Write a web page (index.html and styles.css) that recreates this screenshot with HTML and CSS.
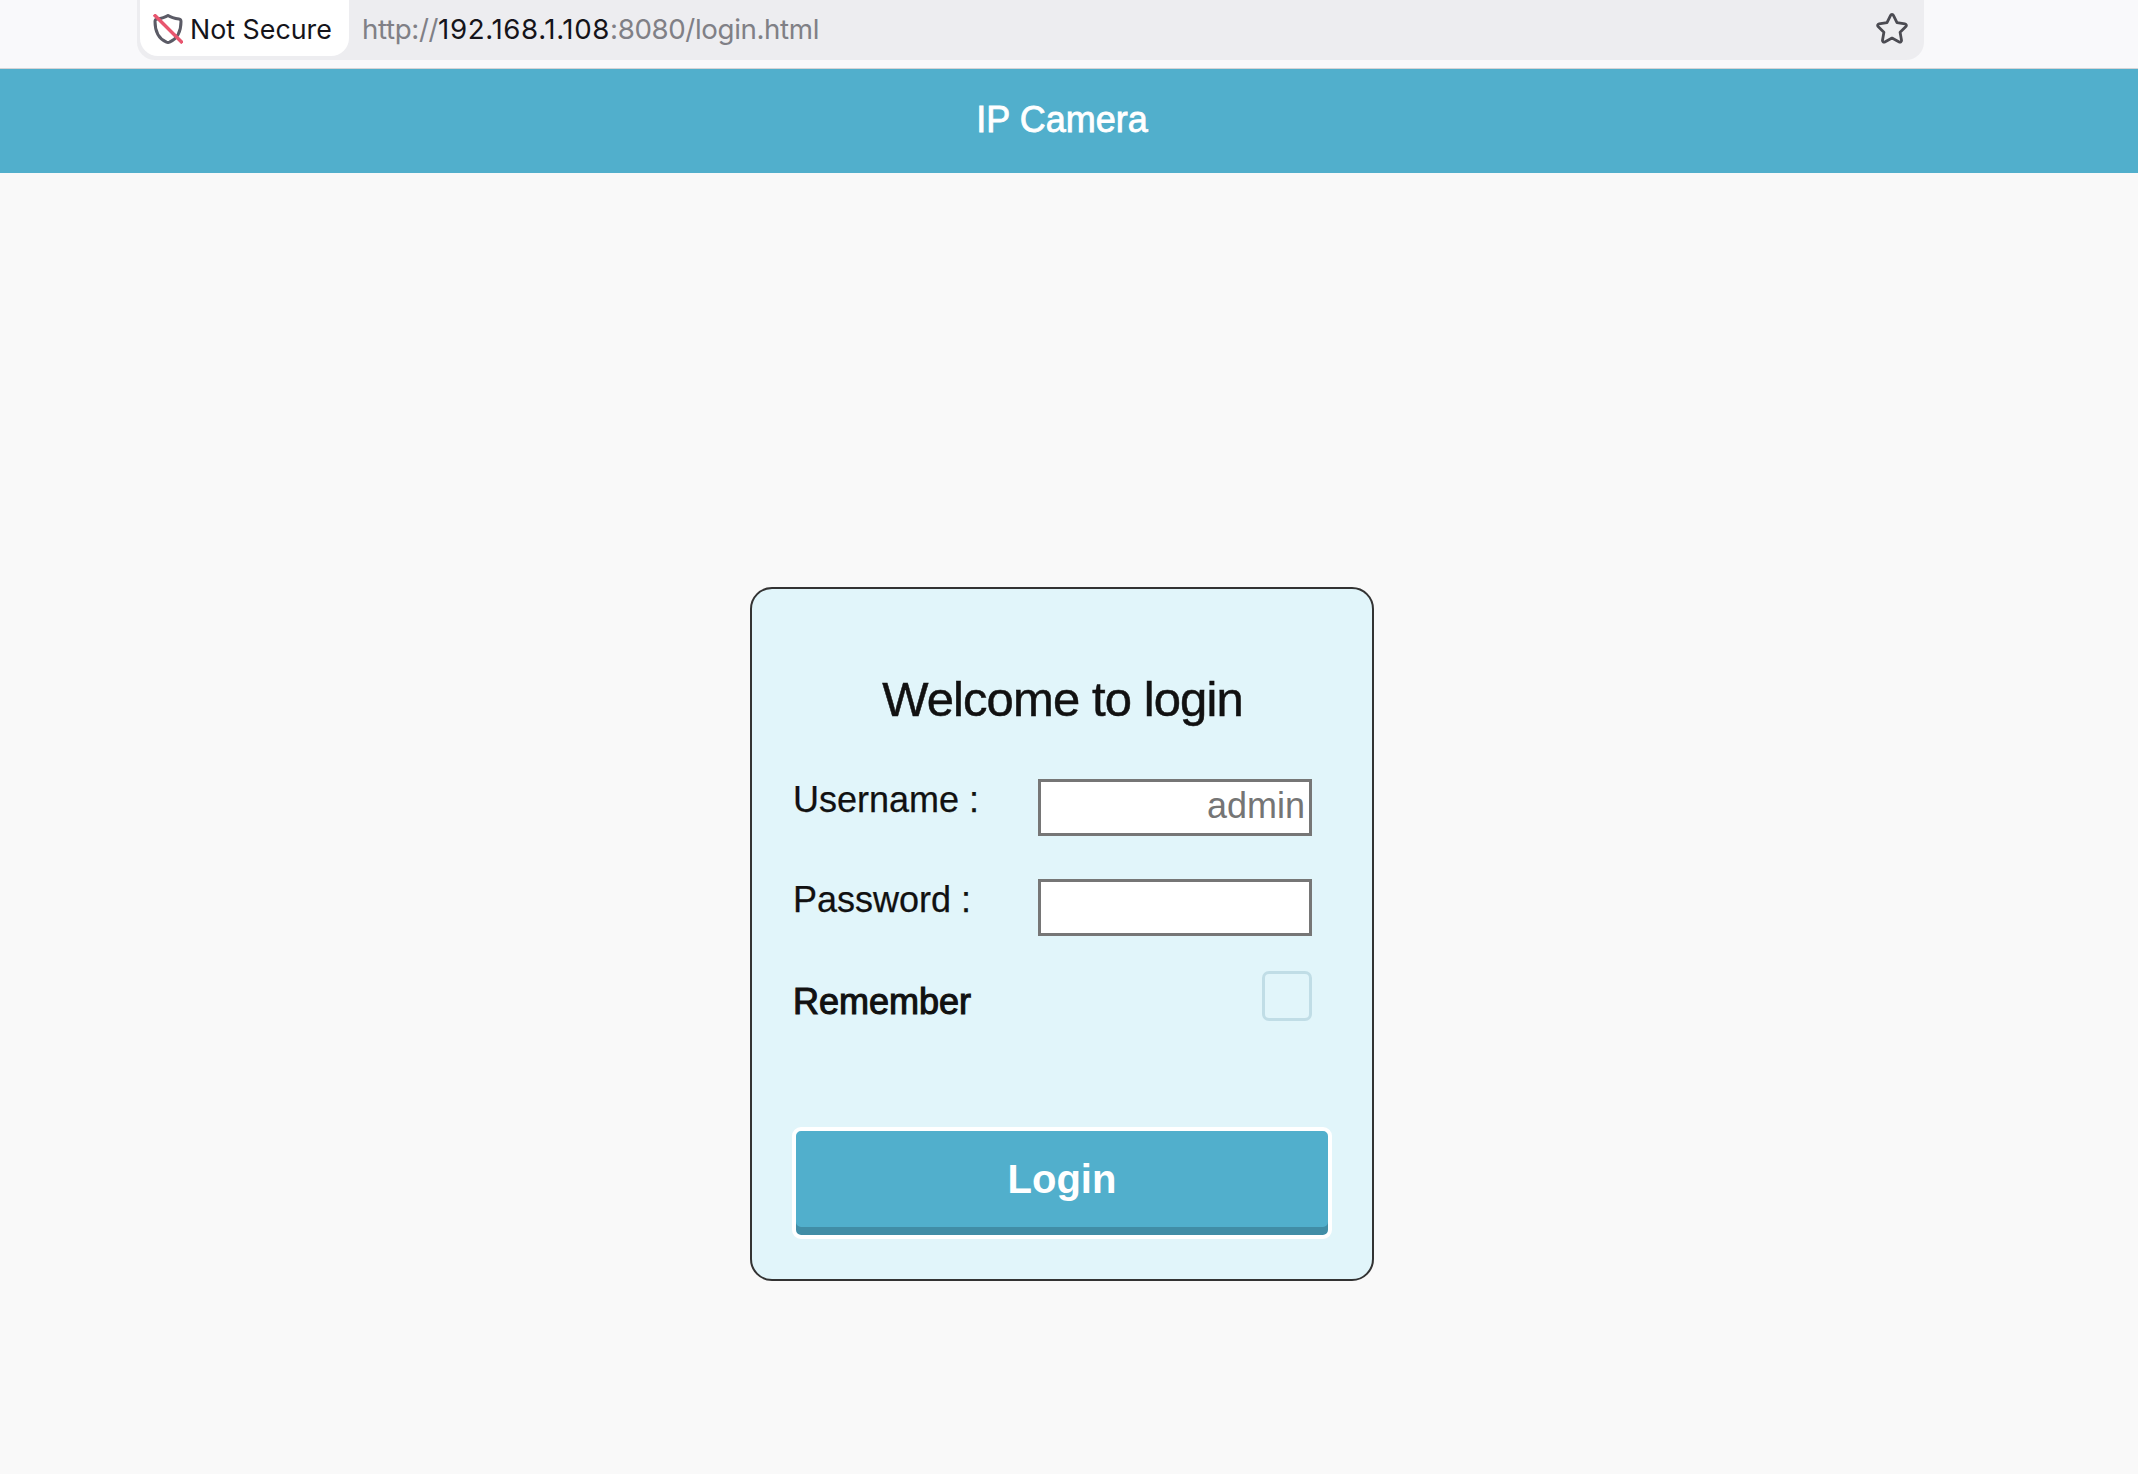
FILE: index.html
```html
<!DOCTYPE html>
<html lang="en">
<head>
<meta charset="utf-8">
<title>IP Camera</title>
<link rel="stylesheet" href="styles.css">
</head>
<body>
<div class="toolbar">
  <div class="urlbar">
    <div class="pill">
      <svg class="shield" viewBox="0 0 30 30" width="30" height="30" aria-hidden="true">
        <path d="M15 1.5 C12 3.5 8 4.5 4 5 C2.5 5.2 2 6 2 7.5 C2 15 4 24 13.5 28.2 C14.5 28.6 15.5 28.6 16.5 28.2 C26 24 28 15 28 7.5 C28 6 27.5 5.2 26 5 C22 4.5 18 3.5 15 1.5 Z" fill="none" stroke="#5b5b66" stroke-width="3" stroke-linejoin="round"/>
        <path d="M1 0.5 L29.5 29" stroke="#e8566f" stroke-width="3.4" fill="none"/>
      </svg>
      <span class="pill-text">Not Secure</span>
    </div>
    <div class="url"><span class="dim">http://</span><span class="host">192.168.1.108</span><span class="dim">:8080/login.html</span></div>
    <svg class="star" viewBox="0 0 32 32" width="32" height="32" aria-hidden="true">
      <path d="M16 2.5 a1.6 1.6 0 0 1 1.4 .9 l3.6 7.3 8 1.2 a1.6 1.6 0 0 1 .9 2.7 l-5.8 5.6 1.4 8 a1.6 1.6 0 0 1 -2.3 1.7 L16 26.1 l-7.2 3.8 a1.6 1.6 0 0 1 -2.3 -1.7 l1.4 -8 -5.8 -5.6 a1.6 1.6 0 0 1 .9 -2.7 l8 -1.2 3.6 -7.3 A1.6 1.6 0 0 1 16 2.5 Z" fill="none" stroke="#4b4b52" stroke-width="2.8" stroke-linejoin="round"/>
    </svg>
  </div>
</div>
<header class="banner"><span class="banner-title">IP Camera</span></header>
<main class="page">
  <form class="card">
    <h1 class="title">Welcome to login</h1>
    <div class="row">
      <label class="label" for="user">Username :</label>
      <input class="field" id="user" type="text" placeholder="admin">
    </div>
    <div class="row">
      <label class="label" for="pass">Password :</label>
      <input class="field" id="pass" type="password">
    </div>
    <div class="row row-remember">
      <span class="label label-strong">Remember</span>
      <span class="check"></span>
    </div>
    <button class="login" type="button">Login</button>
  </form>
</main>
</body>
</html>
```
FILE: styles.css
```css
* { box-sizing: border-box; }
html, body { margin: 0; padding: 0; }
body {
  background: #f9f9f9;
  font-family: "Liberation Sans", Arial, sans-serif;
  color: #111;
  height: 1474px;
  overflow: hidden;
}
.toolbar {
  height: 69px;
  background: #f9f9fb;
  border-bottom: 1px solid #d4d4d6;
  padding-left: 137px;
}
.urlbar {
  width: 1787px;
  height: 60px;
  background: #ededf0;
  border-radius: 0 0 18px 18px;
  display: flex;
  align-items: flex-start;
  padding-left: 3px;
}
.pill {
  width: 209px;
  height: 56px;
  background: #fff;
  border-radius: 0 0 18px 18px;
  display: flex;
  align-items: center;
  padding-left: 13px;
  gap: 7px;
  font-family: Inter, sans-serif;
  font-size: 26.8px;
  color: #15141a;
}
.pill-text { margin-top: 1px; }
.shield { flex: none; margin-top: 1px; }
.url {
  margin-left: 13px;
  height: 58px;
  line-height: 58px;
  font-family: Inter, sans-serif;
  font-size: 27.7px;
  color: #15141a;
  white-space: nowrap;
}
.dim { color: #808086; letter-spacing: -0.37px; }
.host { letter-spacing: 0.6px; }
.star { margin-left: auto; margin-right: 16px; margin-top: 12px; }
.banner {
  height: 104px;
  background: #51afcc;
  width: 100%;
  padding-right: 14px;
  display: flex;
  justify-content: center;
  align-items: center;
}
.banner-title {
  color: #fff;
  font-size: 36px;
  margin-top: -3px;
  -webkit-text-stroke: 0.8px #fff;
}
.page {
  width: 2124px;
  display: flex;
  justify-content: center;
  padding-top: 414px;
}
.card {
  width: 624px;
  height: 694px;
  background: #e1f5fa;
  border: 2px solid #333;
  border-radius: 22px;
  padding: 80px 59px 39px 41px;
}
.title {
  margin: 0 -19px 50px 0;
  font-size: 49px;
  font-weight: 400;
  line-height: 60px;
  letter-spacing: -0.9px;
  text-align: center;
  color: #111;
  -webkit-text-stroke: 0.5px #111;
}
.row {
  display: grid;
  grid-template-columns: 245px 274px;
  align-items: start;
  margin-bottom: 43px;
}
.label { font-size: 36px; line-height: 41px; -webkit-text-stroke: 0.25px #111; }
.field {
  width: 274px;
  height: 57px;
  border: 3px solid #767676;
  border-radius: 0;
  background: #fff;
  padding: 0 4px 3px;
  margin: 0;
  font-family: "Liberation Sans", Arial, sans-serif;
  font-size: 36px;
  text-align: right;
}
.field::placeholder { color: #757575; opacity: 1; }
.row-remember {
  margin-top: -8px;
  grid-template-columns: 225px 294px;
  justify-content: start;
  margin-bottom: 105px;
}
.label-strong {
  padding-top: 10px;
  -webkit-text-stroke: 1.1px #111;
  display: block;
}
.check {
  display: block;
  justify-self: end;
  width: 50px;
  height: 50px;
  border: 3px solid #c0dde6;
  border-radius: 7px;
}
.login {
  display: block;
  margin-left: -1px;
  width: 540px;
  height: 112px;
  background: #51afcc;
  border: 4px solid #fff;
  border-radius: 9px;
  box-shadow: inset 0 -8px 0 #418da6;
  color: #fff;
  font-family: "Liberation Sans", Arial, sans-serif;
  font-weight: 700;
  font-size: 40px;
  padding: 0 0 8px;
}
```
